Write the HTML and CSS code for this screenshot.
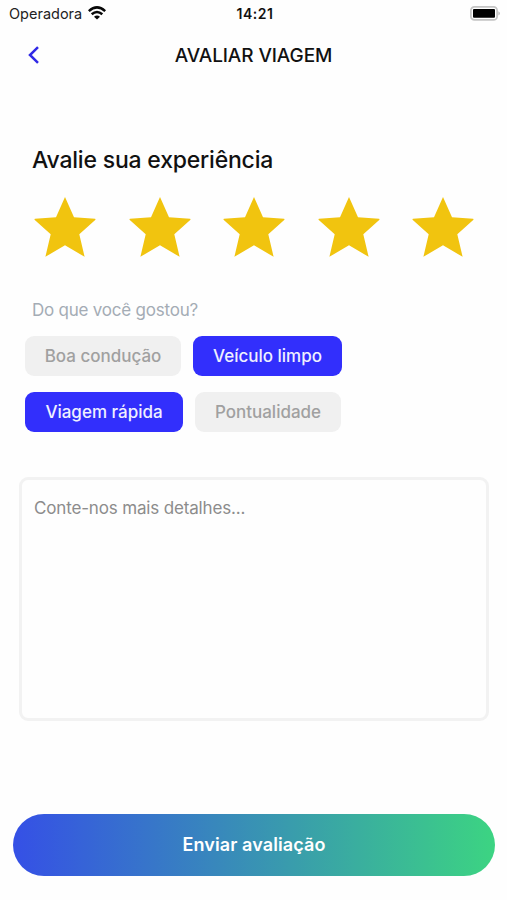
FILE: index.html
```html
<!DOCTYPE html>
<html lang="pt-BR">
<head>
<meta charset="utf-8">
<title>Avaliar viagem</title>
<link rel="stylesheet" href="styles.css">
</head>
<body>
<svg width="0" height="0" class="defs"><symbol id="star" viewBox="0 0 62 60"><path d="M31 0L40 20.3L61 21.8Q62 22.2 61.2 23L45.3 37.2L50.6 59.8L31 48.3L11.4 59.8L16.7 37.2L.8 23Q0 22.2 1 21.8L22 20.3Z"/></symbol></svg>
<div class="status">
  <div class="carrier"><span>Operadora</span>
    <svg class="wifi" viewBox="0 0 18 14"><g fill="none" stroke="#080808" stroke-width="2.5"><path d="M.8 5.1Q9-2.4 17.2 5.1"/><path d="M3.7 8.3Q9 3.6 14.3 8.3"/></g><path d="M6 10.7Q9 8.2 12 10.7L9 13.6Z" fill="#080808"/></svg>
  </div>
  <time>14:21</time>
  <svg class="battery" viewBox="0 0 31 15"><rect x=".9" y=".9" width="26.2" height="13" rx="3.5" fill="#fff" stroke="#c4c4c4" stroke-width="1.7"/><rect x="3" y="3" width="22" height="8.8" rx="1" fill="#000"/><path d="M28.5 5.2Q31 7.4 28.5 9.6Z" fill="#aaa"/></svg>
</div>
<header class="bar">
  <svg class="back" viewBox="0 0 12 18"><path d="M10 1.2L2 9L10 16.8" fill="none" stroke="#3029e6" stroke-width="2.5"/></svg>
  <h1>AVALIAR VIAGEM</h1>
</header>
<main>
  <h2>Avalie sua experiência</h2>
  <div class="stars">
    <svg><use href="#star"/></svg><svg><use href="#star"/></svg><svg><use href="#star"/></svg><svg><use href="#star"/></svg><svg><use href="#star"/></svg>
  </div>
  <p class="question">Do que você gostou?</p>
  <div class="chips">
    <div class="row"><button class="chip boa">Boa condução</button><button class="chip on limpo">Veículo limpo</button></div>
    <div class="row"><button class="chip on rapida">Viagem rápida</button><button class="chip pontual">Pontualidade</button></div>
  </div>
  <textarea placeholder="Conte-nos mais detalhes..."></textarea>
  <button class="send">Enviar avaliação</button>
</main>
</body>
</html>
```
FILE: styles.css
```css
* { box-sizing: border-box; }
body { margin: 0; height: 900px; overflow: hidden; background: #fefefe; color: #111; font-family: Inter, "Liberation Sans", sans-serif; }
h1, h2, p { margin: 0; white-space: nowrap; }
button { border: 0; padding: 0; font-family: inherit; white-space: nowrap; }
.defs { display: block; }
.status { height: 26px; display: grid; grid-template-columns: 1fr auto 1fr; padding: 0 6px 0 9px; align-items: center; }
.carrier { display: flex; align-items: center; gap: 6px; font-size: 14.5px; color: #222; }
.wifi { width: 18px; height: 14px; }
time { font-size: 14px; font-weight: 600; letter-spacing: .5px; }
.battery { width: 31px; height: 15px; justify-self: end; }
.bar { height: 58px; padding: 0 28px; display: grid; grid-template-columns: 12px 1fr 12px; align-items: center; }
.back { width: 12px; height: 18px; margin-bottom: 1px; }
h1 { padding-top: 2px; text-align: center; font-size: 19px; font-weight: 500; line-height: 24px; letter-spacing: -.1px; }
main { padding: 61px 13px 0; }
h2 { margin-left: 19px; font-size: 23px; font-weight: 500; line-height: 30px; letter-spacing: -.2px; }
.stars { display: flex; justify-content: space-between; margin: 22px 20px 0 21px; height: 60px; }
.stars svg { width: 62px; height: 60px; fill: #f1c40f; }
.question { margin: 41px 0 0 19px; font-size: 17px; line-height: 24px; letter-spacing: -.22px; color: #a4acb5; }
.chips { display: flex; flex-direction: column; gap: 16px; margin: 14px 0 0 12px; }
.row { display: flex; gap: 12px; }
.chip { height: 40px; border-radius: 9px; font-size: 17px; font-weight: 500; color: #a0a0a0; background: #f0f0f0; }
.on { color: #eff0ff; background: #322ffc; }
.boa { width: 156px; }
.limpo { width: 149px; }
.rapida { width: 158px; }
.pontual { width: 146px; }
textarea { display: block; width: 470px; height: 244px; margin: 45px 0 0 6px; padding: 16px 12px; border: 3px solid #f2f2f2; border-radius: 9px; background: #fefefe; resize: none; font: 17px/24px Inter, "Liberation Sans", sans-serif; letter-spacing: -.16px; }
textarea::placeholder { color: #8c8c8c; opacity: 1; }
.send { display: block; width: 482px; height: 62px; margin-top: 93px; padding-bottom: 1px; border-radius: 31px; background: linear-gradient(90deg, #3550e6, #3cd482); color: #fff; font-size: 18px; font-weight: 600; letter-spacing: .1px; }
```
